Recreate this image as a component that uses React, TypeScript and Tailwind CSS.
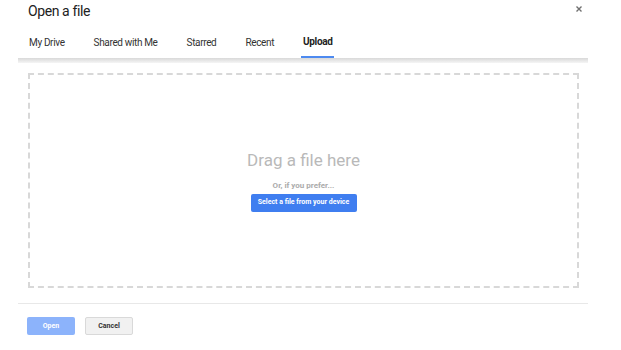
export default function App() {
  const tabs = ["My Drive", "Shared with Me", "Starred", "Recent"];

  return (
    <div className="w-[621px] h-[350px] bg-white font-['Roboto',sans-serif] overflow-hidden">
      <div className="ml-[18px] w-[570px]">
        {/* Header */}
        <div className="h-[26px] flex justify-between items-start pl-[10px] pr-[6px]">
          <h1 className="text-[14px] leading-[20px] tracking-[-0.4px] text-[#212121] pt-[1px]">
            Open a file
          </h1>
          <button className="mt-[6px] text-[#707070]" aria-label="Close">
            <svg width="6" height="6" viewBox="0 0 6 6">
              <path d="M0.5 0.5 L5.5 5.5 M5.5 0.5 L0.5 5.5" stroke="currentColor" strokeWidth="1.4" />
            </svg>
          </button>
        </div>

        {/* Tabs */}
        <div className="flex items-stretch gap-[29px] pl-[11px] h-[32px]">
          {tabs.map((t) => (
            <div key={t} className="flex items-center text-[10px] tracking-[-0.35px] text-[#333]">
              {t}
            </div>
          ))}
          <div className="flex items-center -mx-[2px] px-[2px] border-b-2 border-[#4d8af0] text-[10px] font-bold tracking-[-0.35px] text-[#222]">
            Upload
          </div>
        </div>
        <div className="h-[5px] bg-gradient-to-b from-[#d9d9d9] to-[#f5f5f5]" />

        {/* Drop zone */}
        <div className="mt-[10px] ml-[10px] mr-[9px] h-[215px] border-2 border-dashed border-[#d8d8d8] flex flex-col items-center justify-center">
          <div className="text-[17px] leading-[20px] text-[#b9b9b9]">Drag a file here</div>
          <div className="mt-[11px] text-[8px] leading-[10px] font-bold text-[#ababab]">Or, if you prefer...</div>
          <button className="mt-[3px] w-[106px] h-[18px] rounded-[2px] bg-[#3f7ef0] text-white text-[7px] font-bold">
            Select a file from your device
          </button>
        </div>

        <div className="mt-[15px] h-px bg-[#e8e8e8]" />

        {/* Footer */}
        <div className="flex gap-[10px] pl-[9px] pt-[13px]">
          <button className="w-[48px] h-[18px] rounded-[2px] bg-[#8cb3fb] text-white text-[7px] font-bold">
            Open
          </button>
          <button className="w-[48px] h-[18px] rounded-[2px] bg-[#f1f1f1] border border-[#d9d9d9] text-[#333] text-[7px] font-bold">
            Cancel
          </button>
        </div>
      </div>
    </div>
  );
}
